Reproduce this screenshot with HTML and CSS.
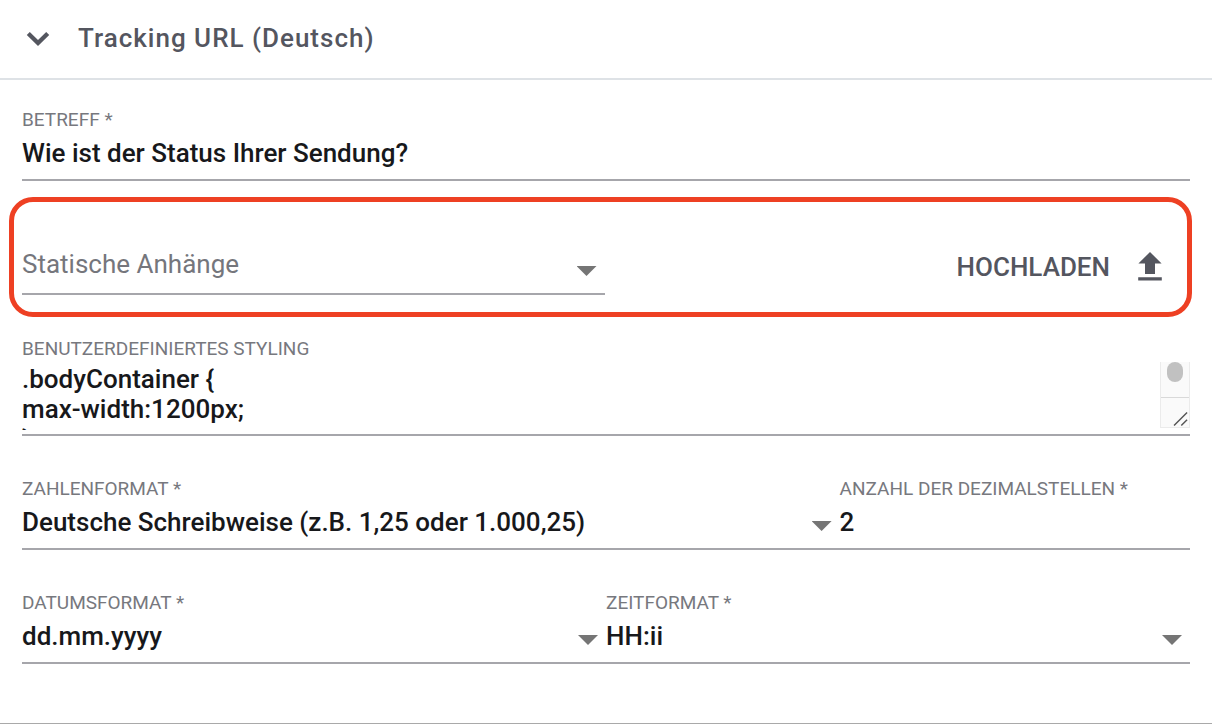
FILE: index.html
```html
<!DOCTYPE html>
<html lang="de">
<head>
<meta charset="utf-8">
<meta name="viewport" content="width=device-width, initial-scale=1">
<title>Tracking URL (Deutsch)</title>
<link rel="stylesheet" href="styles.css">
</head>
<body>
<section class="panel">
  <header class="panel-header">
    <button class="toggle" type="button" aria-label="Abschnitt einklappen" aria-expanded="true">
      <svg width="24" height="20" viewBox="0 0 24 20" aria-hidden="true"><path d="M.8 6.9L3.8 4L12 12.1L20.2 4L23.2 6.9L12 18.1Z" fill="currentColor"/></svg>
    </button>
    <h1 class="title">Tracking URL (Deutsch)</h1>
  </header>
  <form class="form">
    <div class="field">
      <label class="label" for="subject">BETREFF *</label>
      <div class="control"><input class="value" id="subject" type="text" value="Wie ist der Status Ihrer Sendung?"></div>
    </div>

    <div class="highlight">
      <div class="control drop attachments">
        <select class="value placeholder" aria-label="Statische Anhänge"><option>Statische Anhänge</option></select>
      </div>
      <button class="upload" type="button">
        <span>HOCHLADEN</span>
        <svg width="24" height="30" viewBox="0 0 24 30" aria-hidden="true"><path d="M12 0L23.6 11.6H17V22H7V11.6H.4ZM.2 25.2H23.8V28.4H.2Z" fill="currentColor"/></svg>
      </button>
    </div>

    <div class="field">
      <label class="label" for="styling">BENUTZERDEFINIERTES STYLING</label>
      <div class="control code">
        <textarea class="value code-text" id="styling" spellcheck="false">.bodyContainer {
max-width:1200px;
}</textarea>
        <div class="scroll" aria-hidden="true">
          <div class="track"><div class="thumb"></div></div>
          <svg class="grip" width="28" height="30" viewBox="0 0 28 30"><path d="M13 28.5L26.5 15M20.5 28.5L26.5 22.5" stroke="#555" stroke-width="1.5" fill="none"/></svg>
        </div>
      </div>
    </div>

    <div class="row numbers">
      <div class="field">
        <label class="label" for="number">ZAHLENFORMAT *</label>
        <div class="control drop"><select class="value" id="number"><option>Deutsche Schreibweise (z.B. 1,25 oder 1.000,25)</option></select></div>
      </div>
      <div class="field">
        <label class="label" for="decimals">ANZAHL DER DEZIMALSTELLEN *</label>
        <div class="control"><input class="value" id="decimals" type="text" inputmode="numeric" value="2"></div>
      </div>
    </div>

    <div class="row dates">
      <div class="field">
        <label class="label" for="date">DATUMSFORMAT *</label>
        <div class="control drop"><select class="value" id="date"><option>dd.mm.yyyy</option></select></div>
      </div>
      <div class="field">
        <label class="label" for="time">ZEITFORMAT *</label>
        <div class="control drop"><select class="value" id="time"><option>HH:ii</option></select></div>
      </div>
    </div>
  </form>
</section>
</body>
</html>
```
FILE: styles.css
```css
* { box-sizing: border-box; }

body {
  margin: 0;
  background: #fff;
  color: #17181b;
  font-family: Roboto, "Liberation Sans", sans-serif;
}

.panel { border-bottom: 1px solid #a9a9a9; }

.panel-header {
  display: flex;
  align-items: center;
  gap: 28px;
  height: 80px;
  padding: 0 26px 2px;
  border-bottom: 2px solid #dee2e6;
  color: #54565f;
}

.toggle {
  display: flex;
  padding: 0;
  border: 0;
  background: none;
  color: inherit;
}

.title {
  margin: 0;
  font-size: 26px;
  font-weight: 500;
  line-height: 32px;
  letter-spacing: 1px;
}

.form {
  display: flex;
  flex-direction: column;
  padding: 27px 0 59px;
}

.form > .field,
.row { margin: 0 22px; }

.row {
  display: grid;
  padding-top: 40px;
}

.numbers { grid-template-columns: 7fr 3fr; }
.dates { grid-template-columns: 1fr 1fr; }

.field { min-width: 0; }

.label {
  display: block;
  color: #77787e;
  font-size: 19px;
  line-height: 26px;
}

.control {
  display: grid;
  padding-bottom: 6px;
  border-bottom: 2px solid #a6a6ab;
}

.value {
  grid-area: 1 / 1;
  width: 100%;
  min-width: 0;
  height: 40px;
  margin: 0;
  padding: 0;
  border: 0;
  outline: 0;
  border-radius: 0;
  background: transparent;
  appearance: none;
  color: inherit;
  font: 500 26px/30px Roboto, "Liberation Sans", sans-serif;
}

.drop::after {
  content: "";
  grid-area: 1 / 1;
  place-self: center end;
  width: 20px;
  height: 10px;
  margin: 8px 8px 0 0;
  background: #757575;
  clip-path: polygon(0 0, 100% 0, 50% 100%);
  pointer-events: none;
}

.highlight {
  display: grid;
  grid-template-columns: 1fr 1fr;
  align-items: center;
  height: 120px;
  margin: 16px 20px 19px 9px;
  padding: 20px 0 0 8px;
  border: 5px solid #ee4023;
  border-radius: 24px;
}

.attachments { padding: 5px 0 9px; }

.attachments::after { margin-top: 14px; }

.placeholder {
  color: #75767c;
  font-weight: 400;
}

.upload {
  display: flex;
  align-items: center;
  justify-self: end;
  gap: 28px;
  margin-right: 25px;
  padding: 0;
  border: 0;
  background: none;
  color: #54565f;
  font: 500 26px/30px Roboto, "Liberation Sans", sans-serif;
}

.code {
  grid-template-columns: 1fr 30px;
  padding-bottom: 4px;
}

.code-text {
  height: 68px;
  padding-top: 2px;
  overflow: hidden;
  resize: none;
}

.scroll {
  display: flex;
  flex-direction: column;
  height: 66px;
  border: solid #ebebeb;
  border-width: 0 1px 0 1px;
  background: #fafafa;
}

.track {
  flex: 1;
  border-bottom: 1px solid #d9d9d9;
}

.thumb {
  width: 16px;
  height: 20px;
  margin: 0 auto;
  border-radius: 8px;
  background: #c1c1c1;
}

.grip {
  width: 100%;
  border-bottom: 1px solid #ebebeb;
}
```
